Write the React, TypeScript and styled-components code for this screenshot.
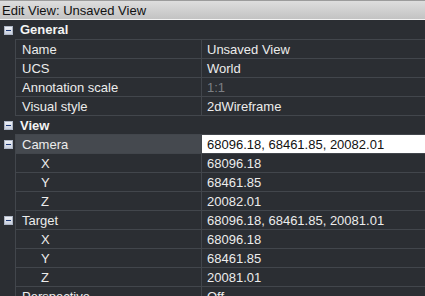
import React from "react";
import styled, { createGlobalStyle } from "styled-components";

const Global = createGlobalStyle`
  html, body { margin: 0; padding: 0; background: #2b2e33; }
  body { width: 425px; height: 296px; overflow: hidden; font-family: "Liberation Sans", Arial, sans-serif; }
  * { box-sizing: border-box; }
`;

const Panel = styled.div`
  width: 425px;
  height: 296px;
  overflow: hidden;
  display: flex;
  flex-direction: column;
  background: #2b2e33;
  font-size: 13px;
`;

const TitleBar = styled.div`
  height: 20px;
  flex: none;
  display: flex;
  align-items: center;
  padding-left: 2px;
  border-top: 1px solid #9c9c9c;
  border-bottom: 1px solid #f2f2f2;
  background: linear-gradient(#dedede, #c3c3c3);
  color: #111;
  font-size: 13px;
`;

const Grid = styled.div`
  display: flex;
  flex-direction: column;
`;

const Row = styled.div<{ $first?: boolean }>`
  display: flex;
  height: ${(p) => (p.$first ? 20 : 19)}px;
  flex: none;
`;

const Gutter = styled.div`
  width: 15px;
  flex: none;
  display: flex;
  align-items: center;
  justify-content: flex-start;
  padding-left: 4px;
  background: #2b2e33;
`;

const Minus = styled.span`
  width: 9px;
  height: 9px;
  border: 1px solid #aeb6c6;
  background: linear-gradient(#eef1f7, #c9d0de);
  position: relative;
  &::after {
    content: "";
    position: absolute;
    left: 1px;
    right: 1px;
    top: 3px;
    height: 1px;
    background: #1f3a78;
  }
`;

const Section = styled.div`
  flex: 1;
  display: flex;
  align-items: center;
  padding-left: 5px;
  font-weight: bold;
  color: #f4f4f4;
  border-bottom: 1px solid #42464c;
`;

const Label = styled.div<{ $indent?: boolean; $active?: boolean }>`
  width: 187px;
  flex: none;
  display: flex;
  align-items: center;
  padding-left: ${(p) => (p.$indent ? 25 : 6)}px;
  color: #ececec;
  background: ${(p) => (p.$active ? "#45494f" : "transparent")};
  border-left: 1px solid #42464c;
  border-right: 1px solid #42464c;
  border-bottom: 1px solid #42464c;
  white-space: nowrap;
  overflow: hidden;
`;

const Value = styled.div<{ $disabled?: boolean; $editing?: boolean }>`
  flex: 1;
  display: flex;
  align-items: center;
  padding-left: 5px;
  color: ${(p) => (p.$editing ? "#111" : p.$disabled ? "#7c7f84" : "#ececec")};
  background: ${(p) => (p.$editing ? "#ffffff" : "transparent")};
  border-bottom: 1px solid #42464c;
  white-space: nowrap;
  overflow: hidden;
`;

type Item =
  | { kind: "section"; title: string }
  | {
      kind: "prop";
      label: string;
      value: string;
      indent?: boolean;
      toggle?: boolean;
      disabled?: boolean;
      active?: boolean;
    };

const items: Item[] = [
  { kind: "section", title: "General" },
  { kind: "prop", label: "Name", value: "Unsaved View" },
  { kind: "prop", label: "UCS", value: "World" },
  { kind: "prop", label: "Annotation scale", value: "1:1", disabled: true },
  { kind: "prop", label: "Visual style", value: "2dWireframe" },
  { kind: "section", title: "View" },
  { kind: "prop", label: "Camera", value: "68096.18, 68461.85, 20082.01", toggle: true, active: true },
  { kind: "prop", label: "X", value: "68096.18", indent: true },
  { kind: "prop", label: "Y", value: "68461.85", indent: true },
  { kind: "prop", label: "Z", value: "20082.01", indent: true },
  { kind: "prop", label: "Target", value: "68096.18, 68461.85, 20081.01", toggle: true },
  { kind: "prop", label: "X", value: "68096.18", indent: true },
  { kind: "prop", label: "Y", value: "68461.85", indent: true },
  { kind: "prop", label: "Z", value: "20081.01", indent: true },
  { kind: "prop", label: "Perspective", value: "Off" },
];

export default function App() {
  return (
    <>
      <Global />
      <Panel>
        <TitleBar>Edit View: Unsaved View</TitleBar>
        <Grid>
          {items.map((it, i) =>
            it.kind === "section" ? (
              <Row key={i} $first={i === 0}>
                <Gutter>
                  <Minus />
                </Gutter>
                <Section>{it.title}</Section>
              </Row>
            ) : (
              <Row key={i}>
                <Gutter>{it.toggle ? <Minus /> : null}</Gutter>
                <Label $indent={it.indent} $active={it.active}>
                  {it.label}
                </Label>
                <Value $disabled={it.disabled} $editing={it.active}>
                  {it.value}
                </Value>
              </Row>
            )
          )}
        </Grid>
      </Panel>
    </>
  );
}
